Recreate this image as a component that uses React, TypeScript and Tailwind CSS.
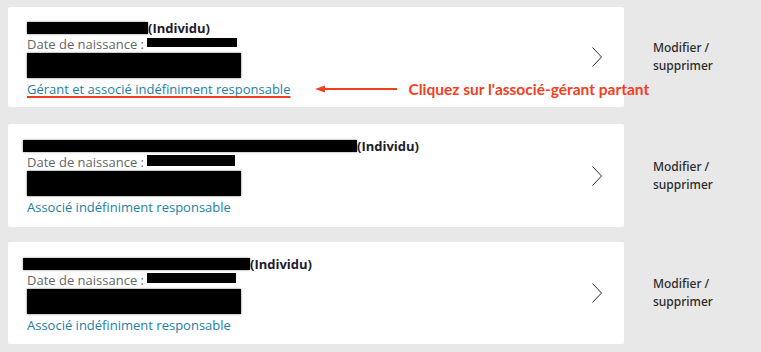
import React from "react";

type Row = {
  nameCls: string;
  dateBoxCls: string;
  link: string;
  annotated: boolean;
};

const rows: Row[] = [
  {
    nameCls: "w-[121px] ml-0",
    dateBoxCls: "w-[90px] h-[9px]",
    link: "Gérant et associé indéfiniment responsable",
    annotated: true,
  },
  {
    nameCls: "w-[334px] -ml-[4px]",
    dateBoxCls: "w-[88px] h-[11px]",
    link: "Associé indéfiniment responsable",
    annotated: false,
  },
  {
    nameCls: "w-[227px] -ml-[4px]",
    dateBoxCls: "w-[89px] h-[10px]",
    link: "Associé indéfiniment responsable",
    annotated: false,
  },
];

function Chevron() {
  return (
    <svg className="shrink-0" width="12" height="22" viewBox="0 0 12 22" fill="none">
      <path d="M1.5 1.5 L10.5 11 L1.5 20.5" stroke="#2b2b2b" strokeWidth="1" />
    </svg>
  );
}

export default function App() {
  return (
    <div
      className="w-[761px] h-[352px] bg-[#e8e8e8] pt-[7px] pl-[8px] overflow-hidden"
      style={{ fontFamily: "'Open Sans', sans-serif" }}
    >
      {rows.map((r, i) => (
        <div key={i} className={"flex items-stretch " + (i === 1 ? "mt-[17px]" : i === 2 ? "mt-[15px]" : "")}>
          <div
            className={
              "relative w-[616px] shrink-0 bg-white rounded-[2px] flex items-center pr-[21px] " +
              (i === 0 ? "h-[100px]" : i === 1 ? "h-[103px]" : "h-[102px]")
            }
          >
            <div className="flex-1 min-w-0 pl-[19px] pt-[3px] flex flex-col text-[13px] whitespace-nowrap">
              <div className="flex items-center h-[16px]">
                <span className={"inline-block h-[12px] bg-black shadow-[0_0_2px_rgba(0,0,0,0.5)] " + r.nameCls} />
                <span className="font-bold text-[#1c1c2c] leading-[16px]">(Individu)</span>
              </div>
              <div className="flex items-center h-[17px]">
                <span className="text-[#666666] leading-[17px]">Date de naissance :&nbsp;</span>
                <span className={"inline-block bg-black -mt-[4px] " + r.dateBoxCls} />
              </div>
              <div className="w-[214px] h-[25px] bg-black shadow-[0_0_2px_rgba(0,0,0,0.6)]" />
              <div className="mt-[3px] leading-[17px] flex items-center">
                <span
                  className={
                    "text-[#1d7fa5] " +
                    (r.annotated
                      ? "underline decoration-[#f2401f] decoration-2 underline-offset-[2px] [text-decoration-skip-ink:none]"
                      : "")
                  }
                >
                  {r.link}
                </span>
                {r.annotated && (
                  <div className="flex items-center ml-[25px] shrink-0">
                    <svg width="84" height="10" viewBox="0 0 84 10">
                      <path d="M0 5 L10 1.5 L10 8.5 Z" fill="#f2401f" />
                      <line x1="8" y1="5" x2="82" y2="5" stroke="#f2401f" strokeWidth="2" />
                    </svg>
                    <span
                      className="ml-[9px] font-bold text-[15.5px] text-[#f2401f] whitespace-nowrap"
                      style={{ fontFamily: "Lato, sans-serif" }}
                    >
                      Cliquez sur l'associé-gérant partant
                    </span>
                  </div>
                )}
              </div>
            </div>
            <Chevron />
          </div>
          <div
            className="ml-[29px] flex flex-col justify-center text-[12px] leading-[18px] font-medium text-[#2a2a2a]"
            style={{ fontFamily: "'Noto Sans', sans-serif" }}
          >
            <span>Modifier /</span>
            <span>supprimer</span>
          </div>
        </div>
      ))}
    </div>
  );
}
